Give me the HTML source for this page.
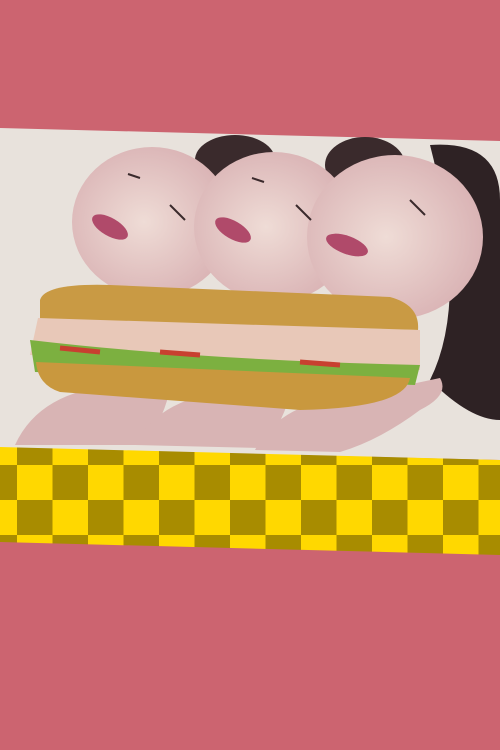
<!DOCTYPE html>
<html><head><style>
html,body{margin:0;padding:0;width:500px;height:750px;overflow:hidden;background:#cc6470;}
</style></head><body>
<svg width="500" height="750" viewBox="0 0 500 750" xmlns="http://www.w3.org/2000/svg">
<defs>
<pattern id="ch" x="17" y="430" width="71" height="70" patternUnits="userSpaceOnUse">
<rect width="71" height="70" fill="#ffd800"/>
<rect x="0" y="0" width="35.5" height="35" fill="#a88c00"/>
<rect x="35.5" y="35" width="35.5" height="35" fill="#a88c00"/>
</pattern>
<radialGradient id="face" cx="0.45" cy="0.5" r="0.6">
<stop offset="0" stop-color="#efdcd6"/><stop offset="1" stop-color="#d8b0b2"/>
</radialGradient>
</defs>
<rect width="500" height="750" fill="#cc6470"/>
<polygon points="0,128 500,141 500,460 0,448" fill="#e8e2dc"/>
<ellipse cx="235" cy="160" rx="40" ry="25" fill="#3a2a2c"/>
<ellipse cx="365" cy="165" rx="40" ry="28" fill="#3a2a2c"/>
<path d="M430,145 Q500,140 500,200 L500,420 Q470,420 430,380 Q470,300 430,145Z" fill="#2e2224"/>
<ellipse cx="152" cy="222" rx="80" ry="75" fill="url(#face)"/>
<ellipse cx="274" cy="227" rx="80" ry="75" fill="url(#face)"/>
<ellipse cx="395" cy="237" rx="88" ry="82" fill="url(#face)"/>
<ellipse cx="110" cy="227" rx="20" ry="9" fill="#b04a6a" transform="rotate(30 110 227)"/>
<ellipse cx="233" cy="230" rx="20" ry="9" fill="#b04a6a" transform="rotate(30 233 230)"/>
<ellipse cx="347" cy="245" rx="22" ry="9" fill="#b04a6a" transform="rotate(20 347 245)"/>
<path d="M170,205 l15,15 M296,205 l15,15 M410,200 l15,15 M128,174 l12,4 M252,178 l12,4" stroke="#3a2a2c" stroke-width="2"/>
<path d="M15,445 Q40,390 120,385 L170,390 Q160,430 140,445Z" fill="#d8b4b4"/>
<path d="M135,445 Q160,395 240,390 L290,395 Q280,430 260,448Z" fill="#d8b4b4"/>
<path d="M255,450 Q280,400 360,395 L440,378 Q450,395 420,410 Q380,440 340,452Z" fill="#d8b4b4"/>
<path d="M40,300 Q45,283 110,285 L390,297 Q420,305 418,330 L40,322Z" fill="#c99a44"/>
<path d="M38,318 L420,330 L420,370 L30,355Z" fill="#e8c8b8"/>
<path d="M30,340 Q200,360 420,365 L415,385 L35,372Z" fill="#7cb040"/>
<path d="M36,362 L410,378 Q405,408 300,410 L60,392 Q38,385 36,362Z" fill="#c9983e"/>
<path d="M60,348 l40,4 M160,352 l40,3 M300,362 l40,3" stroke="#c84030" stroke-width="5"/>
<polygon points="0,447 500,460 500,555 0,542" fill="url(#ch)"/>
</svg>
</body></html>
